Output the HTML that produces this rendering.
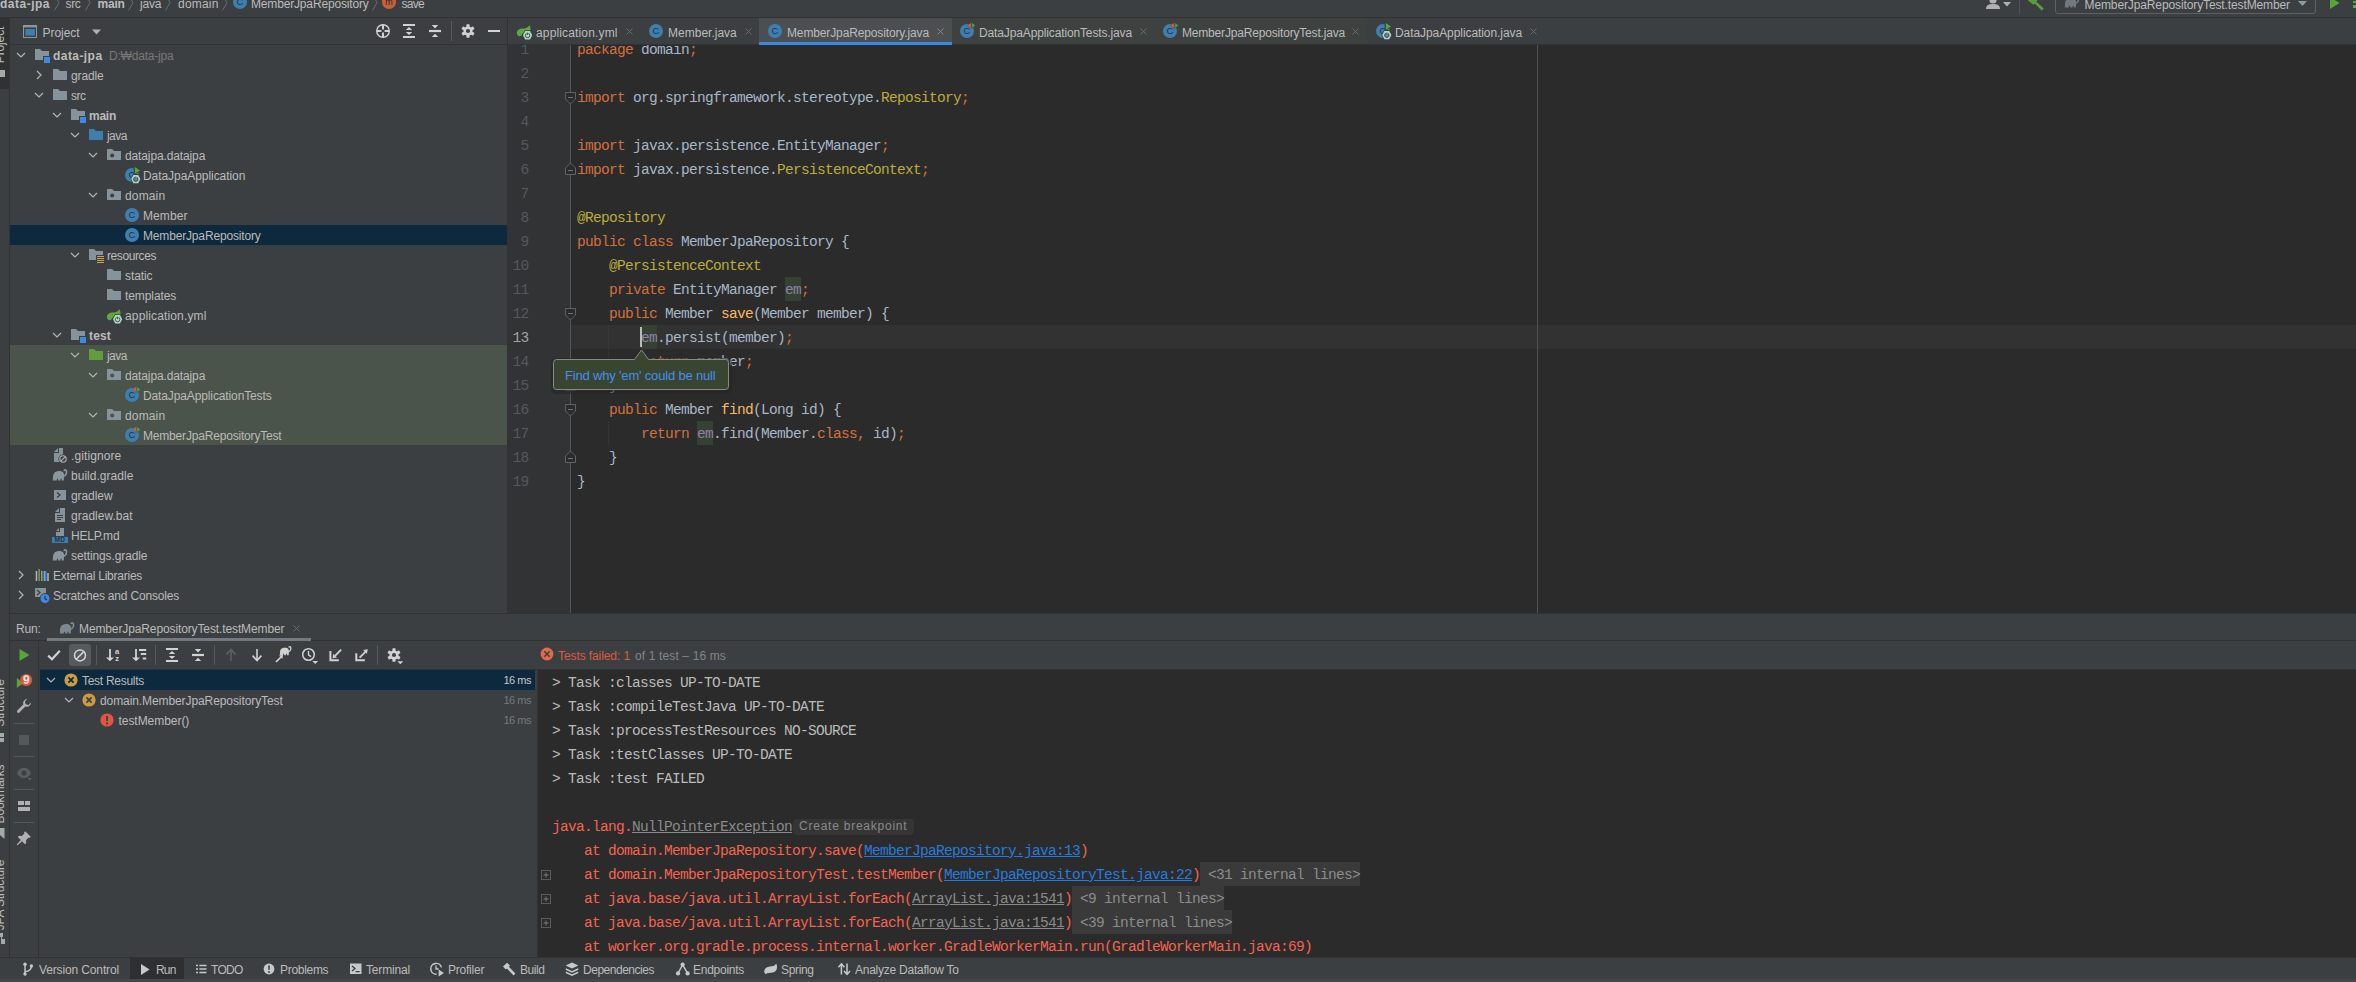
<!DOCTYPE html><html><head><meta charset='utf-8'><title>data-jpa</title><style>
*{box-sizing:border-box;margin:0;padding:0}
html,body{width:2356px;height:982px;overflow:hidden;background:#3c3f41}
body{position:relative;font-family:"Liberation Sans","NanumGothic","Noto Sans CJK KR",sans-serif;font-size:12px;color:#bbbbbb;letter-spacing:-0.14px}
.a{position:absolute}
.t{position:absolute;white-space:pre;line-height:20px;height:20px}
.mono{font-family:"Liberation Mono","DejaVu Sans Mono",monospace;font-size:14.5px;letter-spacing:-0.7015px}
.code{position:absolute;white-space:pre;line-height:24px;height:24px;color:#a9b7c6}
.k{color:#d4703c}.an{color:#bcac3c}.fn{color:#f8b868}.fld{color:#9182a3}
.ln{position:absolute;width:60px;text-align:right;line-height:24px;height:24px;color:#606366}
.err{color:#f6634f}.lnk{color:#287bde;text-decoration:underline}.glnk{color:#8a8a8a;text-decoration:underline}
.fold{background:#3a3a3a;color:#8c8c8c}
svg{position:absolute;overflow:visible}
</style></head><body><div class='a' style='left:0px;top:0px;width:2356px;height:17px;background:#3c3f41;'></div><div class='a' style='left:0px;top:17px;width:2356px;height:1px;background:#323232;'></div><div class='t' style='left:0px;top:-6px;font-weight:bold;letter-spacing:0.498px'>data-jpa</div><svg style='left:53px;top:-6px' width='8' height='17' viewBox='0 0 8 17'><path d='M1.5,0.5 L6,8.5 L1.5,16.5' stroke='#6a6d6f' stroke-width='1' fill='none'/></svg><div class='t' style='left:65.5px;top:-6px;;letter-spacing:-0.333px'>src</div><svg style='left:84px;top:-6px' width='8' height='17' viewBox='0 0 8 17'><path d='M1.5,0.5 L6,8.5 L1.5,16.5' stroke='#6a6d6f' stroke-width='1' fill='none'/></svg><div class='t' style='left:97.5px;top:-6px;font-weight:bold;letter-spacing:-0.204px'>main</div><svg style='left:127px;top:-6px' width='8' height='17' viewBox='0 0 8 17'><path d='M1.5,0.5 L6,8.5 L1.5,16.5' stroke='#6a6d6f' stroke-width='1' fill='none'/></svg><div class='t' style='left:140px;top:-6px;;letter-spacing:-0.179px'>java</div><svg style='left:164px;top:-6px' width='8' height='17' viewBox='0 0 8 17'><path d='M1.5,0.5 L6,8.5 L1.5,16.5' stroke='#6a6d6f' stroke-width='1' fill='none'/></svg><div class='t' style='left:178px;top:-6px;;letter-spacing:0.207px'>domain</div><svg style='left:221px;top:-6px' width='8' height='17' viewBox='0 0 8 17'><path d='M1.5,0.5 L6,8.5 L1.5,16.5' stroke='#6a6d6f' stroke-width='1' fill='none'/></svg><svg style='left:232px;top:-6px' width='16' height='16' viewBox='0 0 16 16'><circle cx='8' cy='8' r='7' fill='#3e7fb0' /><text x='8' y='11.3' text-anchor='middle' font-family='Liberation Sans,sans-serif' font-size='9.5' letter-spacing='0' fill='#1d3447'>C</text></svg><div class='t' style='left:251px;top:-6px;;letter-spacing:-0.164px'>MemberJpaRepository</div><svg style='left:371px;top:-6px' width='8' height='17' viewBox='0 0 8 17'><path d='M1.5,0.5 L6,8.5 L1.5,16.5' stroke='#6a6d6f' stroke-width='1' fill='none'/></svg><svg style='left:381px;top:-6px' width='16' height='16' viewBox='0 0 16 16'><circle cx='8' cy='8' r='7' fill='#c4623f'/><text x='8' y='11' text-anchor='middle' font-family='Liberation Sans,sans-serif' font-size='9' fill='#3a1d12'>m</text></svg><div class='t' style='left:401.5px;top:-6px;;letter-spacing:-0.740px'>save</div><svg style='left:1985px;top:-6px' width='16' height='16' viewBox='0 0 16 16'><circle cx='8' cy='6' r='3.6' fill='#afb1b3'/><path d='M1,15 C1,11 4,10 8,10 C12,10 15,11 15,15 Z' fill='#afb1b3'/></svg><svg style='left:2003px;top:2px' width='8' height='5' viewBox='0 0 8 5'><path d='M0,0 H8 L4,4.5 Z' fill='#afb1b3'/></svg><div class='a' style='left:2019px;top:0px;width:1px;height:14px;background:#515456;'></div><svg style='left:2027px;top:-6px' width='16' height='16' viewBox='0 0 16 16'><path d='M1,6.4 L5.5,2 L10.5,6.6 L9.4,7.8 L16.8,14.4 L14.6,16.6 L7.6,9.6 L6.4,10.8 Z' fill='#5d9c3c'/></svg><div class='a' style='left:2055px;top:-10px;width:261px;height:24px;border:1px solid #5e6162;border-radius:3px'></div><svg style='left:2064px;top:-6px' width='16' height='16' viewBox='0 0 16 16'><path d='M0.8,13.5 L1,9.5 C1.2,6.5 3,4.4 5.5,4.2 C8,3.8 10.6,4.2 11.6,6 L12.2,8.6 L11.8,13.5 L9.8,13.5 L9.6,11.8 L8.6,11.8 L8.4,13.5 L6.2,13.5 L6,11.8 L5,11.8 L4.8,13.5 Z' fill='#6e7a80'/><path d='M11.2,9.2 C13.8,8.8 14.9,6.2 14.5,4.2 C14.2,2.7 12.8,2.5 12.2,3.3' fill='none' stroke='#6e7a80' stroke-width='1.6' stroke-linecap='round'/></svg><div class='t' style='left:2084.5px;top:-5px;;letter-spacing:-0.115px'>MemberJpaRepositoryTest.testMember</div><svg style='left:2298px;top:1px' width='9' height='5' viewBox='0 0 9 5'><path d='M0,0 H9 L4.5,5 Z' fill='#8e9c99'/></svg><svg style='left:2330px;top:-3px' width='10' height='12' viewBox='0 0 10 12'><path d='M0,0 L9.5,6 L0,12 Z' fill='#57a63a'/></svg><div class='a' style='left:2353px;top:1px;width:3px;height:2px;background:#57a63a;'></div><div class='a' style='left:2353px;top:5px;width:3px;height:3px;background:#57a63a;'></div><div class='a' style='left:0px;top:18px;width:10px;height:940px;background:#3c3f41;'></div><div class='a' style='left:0px;top:18px;width:9px;height:71px;background:#2f3133;'></div><div class='a' style='left:9px;top:18px;width:1px;height:940px;background:#323232;'></div><div class='t' style='left:0px;top:45px;transform:translate(-50%,-50%) rotate(-90deg);'>Project</div><div class='a' style='left:0px;top:70px;width:5px;height:7px;background:#a3aaa8;'></div><div class='t' style='left:0px;top:703px;transform:translate(-50%,-50%) rotate(-90deg);'>Structure</div><div class='a' style='left:0px;top:733px;width:4px;height:4px;background:#a3aaa8;'></div><div class='a' style='left:0px;top:738px;width:4px;height:4px;background:#a3aaa8;'></div><div class='t' style='left:0px;top:794px;transform:translate(-50%,-50%) rotate(-90deg);'>Bookmarks</div><svg style='left:0px;top:828px' width='5' height='11' viewBox='0 0 5 11'><path d='M0,0 H4.5 V11 L0,7 Z' fill='#a3aaa8'/></svg><div class='t' style='left:0px;top:895px;transform:translate(-50%,-50%) rotate(-90deg);'>JPA Structure</div><div class='a' style='left:0px;top:933px;width:3px;height:4px;background:#a3aaa8;'></div><div class='a' style='left:1px;top:937px;width:1px;height:4px;background:#a3aaa8;'></div><div class='a' style='left:1px;top:939px;width:4px;height:5px;background:#a3aaa8;'></div><div class='a' style='left:10px;top:18px;width:497px;height:26px;background:#3c3f41;'></div><div class='a' style='left:10px;top:44px;width:497px;height:1px;background:#323232;'></div><div class='a' style='left:507px;top:18px;width:1px;height:596px;background:#323232;'></div><svg style='left:22px;top:23px' width='16' height='16' viewBox='0 0 16 16'><rect x='1.5' y='2.5' width='13' height='12' fill='none' stroke='#8b979e' stroke-width='1'/><rect x='1' y='2' width='14' height='2.4' fill='#8b979e'/><rect x='3.3' y='6' width='9.6' height='6.6' fill='#3e7fb0'/></svg><div class='t' style='left:42.5px;top:23px;;letter-spacing:-0.051px'>Project</div><svg style='left:92px;top:29px' width='9' height='6' viewBox='0 0 9 6'><path d='M0,0.5 H9 L4.5,5.5 Z' fill='#afb1b3'/></svg><svg style='left:375px;top:23px' width='16' height='16' viewBox='0 0 16 16'><circle cx='8' cy='8' r='6.3' fill='none' stroke='#d0d3d2' stroke-width='1.4'/><path d='M8,1.8v4.6M8,9.6V14.2M1.8,8h4.6M9.6,8H14.2' stroke='#d0d3d2' stroke-width='2'/></svg><svg style='left:401px;top:23px' width='16' height='16' viewBox='0 0 16 16'><path d='M2,2h12M2,14h12' stroke='#d0d3d2' stroke-width='2'/><path d='M8,4 L11.2,7 H4.8 Z M8,12 L4.8,9 H11.2 Z' fill='#d0d3d2'/></svg><svg style='left:427px;top:23px' width='16' height='16' viewBox='0 0 16 16'><path d='M2,8h12' stroke='#d0d3d2' stroke-width='2.2'/><path d='M8,5.4 L4.8,2 H11.2 Z M8,10.8 L11.2,14 H4.8 Z' fill='#d0d3d2'/></svg><div class='a' style='left:451px;top:21px;width:1px;height:20px;background:#555a58;'></div><svg style='left:460px;top:23px' width='16' height='16' viewBox='0 0 16 16'><g transform='translate(8 8)'><g fill='#d0d3d2'><rect x='-1.6' y='-6.7' width='3.2' height='4' rx='0.6' transform='rotate(0)'/><rect x='-1.6' y='-6.7' width='3.2' height='4' rx='0.6' transform='rotate(60)'/><rect x='-1.6' y='-6.7' width='3.2' height='4' rx='0.6' transform='rotate(120)'/><rect x='-1.6' y='-6.7' width='3.2' height='4' rx='0.6' transform='rotate(180)'/><rect x='-1.6' y='-6.7' width='3.2' height='4' rx='0.6' transform='rotate(240)'/><rect x='-1.6' y='-6.7' width='3.2' height='4' rx='0.6' transform='rotate(300)'/></g><circle r='4.5' fill='#d0d3d2'/><circle r='2.1' fill='#3c3f41'/></g></svg><div class='a' style='left:488px;top:30px;width:12px;height:2px;background:#d0d3d2;'></div><div class='a' style='left:508px;top:18px;width:1848px;height:26px;background:#3c3f41;'></div><div class='a' style='left:508px;top:44px;width:1848px;height:1px;background:#323232;'></div><div class='a' style='left:759px;top:18px;width:193px;height:24px;background:#4b4f51;'></div><div class='a' style='left:759px;top:42px;width:193px;height:3px;background:#3989e0;'></div><div class='a' style='left:952px;top:18px;width:415px;height:26px;background:#3d4240;'></div><svg style='left:516px;top:23px' width='16' height='16' viewBox='0 0 16 16'><path d='M1.2,11.4 C0,7.4 3,5.6 7.6,5.6 C10.4,5.4 12.2,4.2 13.4,2.2 C15.2,5.4 15,8 12.4,8.6 C8,9.6 6.6,10.2 5.4,12.6 C4,13.6 2,13.2 1.2,11.4 Z' fill='#5fa83c'/><path d='M6.199999999999999,12.3 L8.799999999999999,7.300000000000001 H14.4 L17.0,12.3 L14.4,17.3 H8.799999999999999 Z' fill='#3c3f41'/><path d='M7.0,12.3 L9.200000000000001,8.100000000000001 H13.999999999999998 L16.2,12.3 L13.999999999999998,16.5 H9.200000000000001 Z' fill='#b4d4c4'/><circle cx='11.6' cy='12.5' r='2.2' fill='#b4d4c4' stroke='#3a4a44' stroke-width='0.9'/><rect x='10.7' y='9.3' width='1.8' height='2.3' fill='#b4d4c4'/><path d='M11.6,9.700000000000001v2.4' stroke='#3a4a44' stroke-width='0.9'/></svg><div class='t' style='left:536px;top:23px;;letter-spacing:0.148px'>application.yml</div><svg style='left:625.5px;top:27.5px' width='7' height='7' viewBox='0 0 7 7'><path d='M0.5,0.5 L6.5,6.5 M6.5,0.5 L0.5,6.5' stroke='#6e6e6e' stroke-width='0.9'/></svg><svg style='left:648px;top:23px' width='16' height='16' viewBox='0 0 16 16'><circle cx='8' cy='8' r='7' fill='#3e7fb0' /><text x='8' y='11.3' text-anchor='middle' font-family='Liberation Sans,sans-serif' font-size='9.5' letter-spacing='0' fill='#1d3447'>C</text></svg><div class='t' style='left:668px;top:23px;;letter-spacing:0.009px'>Member.java</div><svg style='left:744.5px;top:27.5px' width='7' height='7' viewBox='0 0 7 7'><path d='M0.5,0.5 L6.5,6.5 M6.5,0.5 L0.5,6.5' stroke='#6e6e6e' stroke-width='0.9'/></svg><svg style='left:767px;top:23px' width='16' height='16' viewBox='0 0 16 16'><circle cx='8' cy='8' r='7' fill='#3e7fb0' /><text x='8' y='11.3' text-anchor='middle' font-family='Liberation Sans,sans-serif' font-size='9.5' letter-spacing='0' fill='#1d3447'>C</text></svg><div class='t' style='left:787px;top:23px;;letter-spacing:-0.132px'>MemberJpaRepository.java</div><svg style='left:936.5px;top:27.5px' width='7' height='7' viewBox='0 0 7 7'><path d='M0.5,0.5 L6.5,6.5 M6.5,0.5 L0.5,6.5' stroke='#8a8d8f' stroke-width='0.9'/></svg><svg style='left:959px;top:23px' width='16' height='16' viewBox='0 0 16 16'><circle cx='8' cy='8' r='7' fill='#3e7fb0' /><text x='8' y='11.3' text-anchor='middle' font-family='Liberation Sans,sans-serif' font-size='9.5' letter-spacing='0' fill='#1d3447'>C</text><path d='M8.6,2.4 L12.1,-0.6 V5.4 Z' fill='#f0594a' stroke='#3d4240' stroke-width='0.5'/><path d='M12.8,-0.6 L16.3,2.4 L12.8,5.4 Z' fill='#57a63a' stroke='#3d4240' stroke-width='0.5'/></svg><div class='t' style='left:979px;top:23px;;letter-spacing:-0.134px'>DataJpaApplicationTests.java</div><svg style='left:1139.5px;top:27.5px' width='7' height='7' viewBox='0 0 7 7'><path d='M0.5,0.5 L6.5,6.5 M6.5,0.5 L0.5,6.5' stroke='#6e6e6e' stroke-width='0.9'/></svg><svg style='left:1162px;top:23px' width='16' height='16' viewBox='0 0 16 16'><circle cx='8' cy='8' r='7' fill='#3e7fb0' /><text x='8' y='11.3' text-anchor='middle' font-family='Liberation Sans,sans-serif' font-size='9.5' letter-spacing='0' fill='#1d3447'>C</text><path d='M8.6,2.4 L12.1,-0.6 V5.4 Z' fill='#f0594a' stroke='#3d4240' stroke-width='0.5'/><path d='M12.8,-0.6 L16.3,2.4 L12.8,5.4 Z' fill='#57a63a' stroke='#3d4240' stroke-width='0.5'/></svg><div class='t' style='left:1182px;top:23px;;letter-spacing:-0.181px'>MemberJpaRepositoryTest.java</div><svg style='left:1351.5px;top:27.5px' width='7' height='7' viewBox='0 0 7 7'><path d='M0.5,0.5 L6.5,6.5 M6.5,0.5 L0.5,6.5' stroke='#6e6e6e' stroke-width='0.9'/></svg><svg style='left:1375px;top:23px' width='16' height='16' viewBox='0 0 16 16'><circle cx='8' cy='8' r='7' fill='#3e7fb0' /><text x='8' y='11.3' text-anchor='middle' font-family='Liberation Sans,sans-serif' font-size='9.5' letter-spacing='0' fill='#1d3447'>C</text><path d='M9.6,-1.4 L17.6,3.4 L9.6,8.2 Z' fill='#3c3f41'/><path d='M10.8,0 L16.1,3.4 L10.8,6.8 Z' fill='#57a63a'/><path d='M6.4,12.1 L9.000000000000002,7.1 H14.6 L17.200000000000003,12.1 L14.6,17.1 H9.000000000000002 Z' fill='#3c3f41'/><path d='M7.200000000000001,12.1 L9.4,7.8999999999999995 H14.200000000000001 L16.4,12.1 L14.200000000000001,16.3 H9.4 Z' fill='#b4d4c4'/><circle cx='11.8' cy='12.299999999999999' r='2.2' fill='#4a8ab5' stroke='#3a4a44' stroke-width='0.9'/><rect x='10.9' y='9.1' width='1.8' height='2.3' fill='#b4d4c4'/><path d='M11.8,9.5v2.4' stroke='#3a4a44' stroke-width='0.9'/></svg><div class='t' style='left:1395px;top:23px;;letter-spacing:-0.076px'>DataJpaApplication.java</div><svg style='left:1529.5px;top:27.5px' width='7' height='7' viewBox='0 0 7 7'><path d='M0.5,0.5 L6.5,6.5 M6.5,0.5 L0.5,6.5' stroke='#6e6e6e' stroke-width='0.9'/></svg><div class='a' style='left:10px;top:45px;width:497px;height:568px;background:#3c3f41;'></div><div class='a' style='left:10px;top:225px;width:497px;height:20px;background:#0d293e;'></div><div class='a' style='left:10px;top:345px;width:497px;height:100px;background:#4a544a;'></div><svg style='left:15px;top:51px' width='12' height='8' viewBox='0 0 12 8'><path d='M2,2 L6,6 L10,2' fill='none' stroke='#adb8b5' stroke-width='1.2'/></svg><svg style='left:34px;top:47px' width='16' height='16' viewBox='0 0 16 16'><path d='M1,13 V2 H6 L8,4 H15 V13 Z' fill='#87939a'/><rect x='9' y='9' width='7' height='7' fill='#3c3f41'/><rect x='10' y='10' width='6' height='6' fill='#3b8ae6'/></svg><div class='t' style='left:53px;top:45.5px;font-weight:bold;letter-spacing:0.436px'>data-jpa</div><svg style='left:35px;top:69px' width='8' height='12' viewBox='0 0 8 12'><path d='M2,2 L6,6 L2,10' fill='none' stroke='#adb8b5' stroke-width='1.2'/></svg><svg style='left:52px;top:67px' width='16' height='16' viewBox='0 0 16 16'><path d='M1,13 V2 H6 L8,4 H15 V13 Z' fill='#87939a'/></svg><div class='t' style='left:71px;top:65.5px;;letter-spacing:-0.127px'>gradle</div><svg style='left:33px;top:91px' width='12' height='8' viewBox='0 0 12 8'><path d='M2,2 L6,6 L10,2' fill='none' stroke='#adb8b5' stroke-width='1.2'/></svg><svg style='left:52px;top:87px' width='16' height='16' viewBox='0 0 16 16'><path d='M1,13 V2 H6 L8,4 H15 V13 Z' fill='#87939a'/></svg><div class='t' style='left:71px;top:85.5px;;letter-spacing:-0.500px'>src</div><svg style='left:51px;top:111px' width='12' height='8' viewBox='0 0 12 8'><path d='M2,2 L6,6 L10,2' fill='none' stroke='#adb8b5' stroke-width='1.2'/></svg><svg style='left:70px;top:107px' width='16' height='16' viewBox='0 0 16 16'><path d='M1,13 V2 H6 L8,4 H15 V13 Z' fill='#87939a'/><rect x='9' y='9' width='7' height='7' fill='#3c3f41'/><rect x='10' y='10' width='6' height='6' fill='#3b8ae6'/></svg><div class='t' style='left:89px;top:105.5px;font-weight:bold;letter-spacing:-0.254px'>main</div><svg style='left:69px;top:131px' width='12' height='8' viewBox='0 0 12 8'><path d='M2,2 L6,6 L10,2' fill='none' stroke='#adb8b5' stroke-width='1.2'/></svg><svg style='left:88px;top:127px' width='16' height='16' viewBox='0 0 16 16'><path d='M1,13 V2 H6 L8,4 H15 V13 Z' fill='#3e7fb0'/></svg><div class='t' style='left:107px;top:125.5px;;letter-spacing:-0.554px'>java</div><svg style='left:87px;top:151px' width='12' height='8' viewBox='0 0 12 8'><path d='M2,2 L6,6 L10,2' fill='none' stroke='#adb8b5' stroke-width='1.2'/></svg><svg style='left:106px;top:147px' width='16' height='16' viewBox='0 0 16 16'><path d='M1,13 V2 H6 L8,4 H15 V13 Z' fill='#87939a'/><circle cx='6.2' cy='8.5' r='2' fill='#3c3f41'/></svg><div class='t' style='left:125px;top:145.5px;;letter-spacing:-0.125px'>datajpa.datajpa</div><svg style='left:124px;top:167px' width='16' height='16' viewBox='0 0 16 16'><circle cx='8' cy='8' r='7' fill='#3e7fb0' /><text x='8' y='11.3' text-anchor='middle' font-family='Liberation Sans,sans-serif' font-size='9.5' letter-spacing='0' fill='#1d3447'>C</text><path d='M9.6,-1.4 L17.6,3.4 L9.6,8.2 Z' fill='#3c3f41'/><path d='M10.8,0 L16.1,3.4 L10.8,6.8 Z' fill='#57a63a'/><path d='M6.4,12.1 L9.000000000000002,7.1 H14.6 L17.200000000000003,12.1 L14.6,17.1 H9.000000000000002 Z' fill='#3c3f41'/><path d='M7.200000000000001,12.1 L9.4,7.8999999999999995 H14.200000000000001 L16.4,12.1 L14.200000000000001,16.3 H9.4 Z' fill='#b4d4c4'/><circle cx='11.8' cy='12.299999999999999' r='2.2' fill='#4a8ab5' stroke='#3a4a44' stroke-width='0.9'/><rect x='10.9' y='9.1' width='1.8' height='2.3' fill='#b4d4c4'/><path d='M11.8,9.5v2.4' stroke='#3a4a44' stroke-width='0.9'/></svg><div class='t' style='left:143px;top:165.5px;;letter-spacing:-0.061px'>DataJpaApplication</div><svg style='left:87px;top:191px' width='12' height='8' viewBox='0 0 12 8'><path d='M2,2 L6,6 L10,2' fill='none' stroke='#adb8b5' stroke-width='1.2'/></svg><svg style='left:106px;top:187px' width='16' height='16' viewBox='0 0 16 16'><path d='M1,13 V2 H6 L8,4 H15 V13 Z' fill='#87939a'/><circle cx='6.2' cy='8.5' r='2' fill='#3c3f41'/></svg><div class='t' style='left:125px;top:185.5px;;letter-spacing:0.140px'>domain</div><svg style='left:124px;top:207px' width='16' height='16' viewBox='0 0 16 16'><circle cx='8' cy='8' r='7' fill='#3e7fb0' /><text x='8' y='11.3' text-anchor='middle' font-family='Liberation Sans,sans-serif' font-size='9.5' letter-spacing='0' fill='#1d3447'>C</text></svg><div class='t' style='left:143px;top:205.5px;;letter-spacing:0.081px'>Member</div><svg style='left:124px;top:227px' width='16' height='16' viewBox='0 0 16 16'><circle cx='8' cy='8' r='7' fill='#3e7fb0' /><text x='8' y='11.3' text-anchor='middle' font-family='Liberation Sans,sans-serif' font-size='9.5' letter-spacing='0' fill='#1d3447'>C</text></svg><div class='t' style='left:143px;top:225.5px;;letter-spacing:-0.164px'>MemberJpaRepository</div><svg style='left:69px;top:251px' width='12' height='8' viewBox='0 0 12 8'><path d='M2,2 L6,6 L10,2' fill='none' stroke='#adb8b5' stroke-width='1.2'/></svg><svg style='left:88px;top:247px' width='16' height='16' viewBox='0 0 16 16'><path d='M1,13 V2 H6 L8,4 H15 V13 Z' fill='#87939a'/><rect x='8' y='8' width='8' height='8' fill='#3c3f41'/><path d='M9,9.5h7M9,11.5h7M9,13.5h7M9,15.5h7' stroke='#c9a64b' stroke-width='1'/></svg><div class='t' style='left:107px;top:245.5px;;letter-spacing:-0.399px'>resources</div><svg style='left:106px;top:267px' width='16' height='16' viewBox='0 0 16 16'><path d='M1,13 V2 H6 L8,4 H15 V13 Z' fill='#87939a'/></svg><div class='t' style='left:125px;top:265.5px;;letter-spacing:-0.086px'>static</div><svg style='left:106px;top:287px' width='16' height='16' viewBox='0 0 16 16'><path d='M1,13 V2 H6 L8,4 H15 V13 Z' fill='#87939a'/></svg><div class='t' style='left:125px;top:285.5px;;letter-spacing:-0.092px'>templates</div><svg style='left:106px;top:307px' width='16' height='16' viewBox='0 0 16 16'><path d='M1.2,11.4 C0,7.4 3,5.6 7.6,5.6 C10.4,5.4 12.2,4.2 13.4,2.2 C15.2,5.4 15,8 12.4,8.6 C8,9.6 6.6,10.2 5.4,12.6 C4,13.6 2,13.2 1.2,11.4 Z' fill='#5fa83c'/><path d='M6.199999999999999,12.3 L8.799999999999999,7.300000000000001 H14.4 L17.0,12.3 L14.4,17.3 H8.799999999999999 Z' fill='#3c3f41'/><path d='M7.0,12.3 L9.200000000000001,8.100000000000001 H13.999999999999998 L16.2,12.3 L13.999999999999998,16.5 H9.200000000000001 Z' fill='#b4d4c4'/><circle cx='11.6' cy='12.5' r='2.2' fill='#b4d4c4' stroke='#3a4a44' stroke-width='0.9'/><rect x='10.7' y='9.3' width='1.8' height='2.3' fill='#b4d4c4'/><path d='M11.6,9.700000000000001v2.4' stroke='#3a4a44' stroke-width='0.9'/></svg><div class='t' style='left:125px;top:305.5px;;letter-spacing:0.142px'>application.yml</div><svg style='left:51px;top:331px' width='12' height='8' viewBox='0 0 12 8'><path d='M2,2 L6,6 L10,2' fill='none' stroke='#adb8b5' stroke-width='1.2'/></svg><svg style='left:70px;top:327px' width='16' height='16' viewBox='0 0 16 16'><path d='M1,13 V2 H6 L8,4 H15 V13 Z' fill='#87939a'/><rect x='9' y='9' width='7' height='7' fill='#3c3f41'/><rect x='10' y='10' width='6' height='6' fill='#3b8ae6'/></svg><div class='t' style='left:89px;top:325.5px;font-weight:bold;letter-spacing:0.139px'>test</div><svg style='left:69px;top:351px' width='12' height='8' viewBox='0 0 12 8'><path d='M2,2 L6,6 L10,2' fill='none' stroke='#adb8b5' stroke-width='1.2'/></svg><svg style='left:88px;top:347px' width='16' height='16' viewBox='0 0 16 16'><path d='M1,13 V2 H6 L8,4 H15 V13 Z' fill='#5f9d3e'/></svg><div class='t' style='left:107px;top:345.5px;;letter-spacing:-0.554px'>java</div><svg style='left:87px;top:371px' width='12' height='8' viewBox='0 0 12 8'><path d='M2,2 L6,6 L10,2' fill='none' stroke='#adb8b5' stroke-width='1.2'/></svg><svg style='left:106px;top:367px' width='16' height='16' viewBox='0 0 16 16'><path d='M1,13 V2 H6 L8,4 H15 V13 Z' fill='#87939a'/><circle cx='6.2' cy='8.5' r='2' fill='#4a544a'/></svg><div class='t' style='left:125px;top:365.5px;;letter-spacing:-0.125px'>datajpa.datajpa</div><svg style='left:124px;top:387px' width='16' height='16' viewBox='0 0 16 16'><circle cx='8' cy='8' r='7' fill='#3e7fb0' /><text x='8' y='11.3' text-anchor='middle' font-family='Liberation Sans,sans-serif' font-size='9.5' letter-spacing='0' fill='#1d3447'>C</text><path d='M8.6,2.4 L12.1,-0.6 V5.4 Z' fill='#f0594a' stroke='#4a544a' stroke-width='0.5'/><path d='M12.8,-0.6 L16.3,2.4 L12.8,5.4 Z' fill='#57a63a' stroke='#4a544a' stroke-width='0.5'/></svg><div class='t' style='left:143px;top:385.5px;;letter-spacing:-0.123px'>DataJpaApplicationTests</div><svg style='left:87px;top:411px' width='12' height='8' viewBox='0 0 12 8'><path d='M2,2 L6,6 L10,2' fill='none' stroke='#adb8b5' stroke-width='1.2'/></svg><svg style='left:106px;top:407px' width='16' height='16' viewBox='0 0 16 16'><path d='M1,13 V2 H6 L8,4 H15 V13 Z' fill='#87939a'/><circle cx='6.2' cy='8.5' r='2' fill='#4a544a'/></svg><div class='t' style='left:125px;top:405.5px;;letter-spacing:0.140px'>domain</div><svg style='left:124px;top:427px' width='16' height='16' viewBox='0 0 16 16'><circle cx='8' cy='8' r='7' fill='#3e7fb0' /><text x='8' y='11.3' text-anchor='middle' font-family='Liberation Sans,sans-serif' font-size='9.5' letter-spacing='0' fill='#1d3447'>C</text><path d='M8.6,2.4 L12.1,-0.6 V5.4 Z' fill='#f0594a' stroke='#4a544a' stroke-width='0.5'/><path d='M12.8,-0.6 L16.3,2.4 L12.8,5.4 Z' fill='#57a63a' stroke='#4a544a' stroke-width='0.5'/></svg><div class='t' style='left:143px;top:425.5px;;letter-spacing:-0.184px'>MemberJpaRepositoryTest</div><svg style='left:52px;top:447px' width='16' height='16' viewBox='0 0 16 16'><path d='M2,15 V6 H7 V1 H11 V15 Z' fill='#87939a'/><path d='M2,5 L6,1 V5 Z' fill='#87939a'/><circle cx='11' cy='12' r='4.6' fill='#3c3f41'/><circle cx='11' cy='12' r='3.2' fill='none' stroke='#afb5b8' stroke-width='1.1'/><path d='M8.8,14.2 L13.2,9.8' stroke='#afb5b8' stroke-width='1.1'/></svg><div class='t' style='left:71px;top:445.5px;;letter-spacing:0.102px'>.gitignore</div><svg style='left:52px;top:467px' width='16' height='16' viewBox='0 0 16 16'><path d='M0.8,13.5 L1,9.5 C1.2,6.5 3,4.4 5.5,4.2 C8,3.8 10.6,4.2 11.6,6 L12.2,8.6 L11.8,13.5 L9.8,13.5 L9.6,11.8 L8.6,11.8 L8.4,13.5 L6.2,13.5 L6,11.8 L5,11.8 L4.8,13.5 Z' fill='#8b979e'/><path d='M11.2,9.2 C13.8,8.8 14.9,6.2 14.5,4.2 C14.2,2.7 12.8,2.5 12.2,3.3' fill='none' stroke='#8b979e' stroke-width='1.6' stroke-linecap='round'/></svg><div class='t' style='left:71px;top:465.5px;;letter-spacing:0.029px'>build.gradle</div><svg style='left:52px;top:487px' width='16' height='16' viewBox='0 0 16 16'><rect x='2' y='3' width='12' height='10' fill='#87939a'/><path d='M5,5.5 L8,8 L5,10.5' fill='none' stroke='#3c3f41' stroke-width='1.4'/></svg><div class='t' style='left:71px;top:485.5px;;letter-spacing:-0.076px'>gradlew</div><svg style='left:52px;top:507px' width='16' height='16' viewBox='0 0 16 16'><path d='M3,15 V6 H8 V1 H13 V15 Z' fill='#87939a'/><path d='M3,5 L7,1 V5 Z' fill='#87939a'/><path d='M5,8.5h6M5,10.5h6M5,12.5h4' stroke='#3c3f41' stroke-width='1'/></svg><div class='t' style='left:71px;top:505.5px;;letter-spacing:0.019px'>gradlew.bat</div><svg style='left:52px;top:527px' width='16' height='16' viewBox='0 0 16 16'><path d='M4,9 V5 H8 V1 H12 V9 Z' fill='#87939a'/><path d='M4,4 L7,1 V4 Z' fill='#87939a'/><rect x='0' y='10' width='16' height='6' fill='#3e7fb0'/><text x='8' y='15.3' text-anchor='middle' font-family='Liberation Sans,sans-serif' font-weight='bold' font-size='6.6' letter-spacing='0.3' fill='#1d3447'>MD</text></svg><div class='t' style='left:71px;top:525.5px;;letter-spacing:-0.202px'>HELP.md</div><svg style='left:52px;top:547px' width='16' height='16' viewBox='0 0 16 16'><path d='M0.8,13.5 L1,9.5 C1.2,6.5 3,4.4 5.5,4.2 C8,3.8 10.6,4.2 11.6,6 L12.2,8.6 L11.8,13.5 L9.8,13.5 L9.6,11.8 L8.6,11.8 L8.4,13.5 L6.2,13.5 L6,11.8 L5,11.8 L4.8,13.5 Z' fill='#8b979e'/><path d='M11.2,9.2 C13.8,8.8 14.9,6.2 14.5,4.2 C14.2,2.7 12.8,2.5 12.2,3.3' fill='none' stroke='#8b979e' stroke-width='1.6' stroke-linecap='round'/></svg><div class='t' style='left:71px;top:545.5px;;letter-spacing:-0.110px'>settings.gradle</div><svg style='left:17px;top:569px' width='8' height='12' viewBox='0 0 8 12'><path d='M2,2 L6,6 L2,10' fill='none' stroke='#adb8b5' stroke-width='1.2'/></svg><svg style='left:34px;top:567px' width='16' height='16' viewBox='0 0 16 16'><path d='M2.5,4v10M10.5,4v10M14,6v8' stroke='#afb1b3' stroke-width='1.6'/><path d='M5.2,2v12' stroke='#62a03a' stroke-width='1.6'/><path d='M7.8,4v10' stroke='#afb1b3' stroke-width='1.2'/><path d='M11.5,4v10' stroke='#3b8ae6' stroke-width='1.8'/></svg><div class='t' style='left:53px;top:565.5px;;letter-spacing:-0.238px'>External Libraries</div><svg style='left:17px;top:589px' width='8' height='12' viewBox='0 0 8 12'><path d='M2,2 L6,6 L2,10' fill='none' stroke='#adb8b5' stroke-width='1.2'/></svg><svg style='left:34px;top:587px' width='16' height='16' viewBox='0 0 16 16'><rect x='1' y='1' width='11' height='9' fill='#87939a'/><path d='M3,3 L6,5.5 L3,8' fill='none' stroke='#3c3f41' stroke-width='1.2'/><circle cx='11' cy='11.5' r='5.4' fill='#3c3f41'/><circle cx='11' cy='11.5' r='4.5' fill='#3b8ae6'/><path d='M11,8.8 V11.6 L13,13' fill='none' stroke='#1d3447' stroke-width='1.1'/></svg><div class='t' style='left:53px;top:585.5px;;letter-spacing:-0.185px'>Scratches and Consoles</div><div class='t' style='left:109px;top:45.5px;color:#787878;letter-spacing:-0.200px'>D:₩data-jpa</div><div class='a' style='left:508px;top:45px;width:1848px;height:568px;background:#2b2b2b;overflow:hidden'><div class='a' style='left:0px;top:0px;width:62px;height:568px;background:#313335;'></div><div class='a' style='left:63px;top:280px;width:1785px;height:24px;background:#323232;'></div><div class='a' style='left:62px;top:0px;width:1px;height:568px;background:#555555;'></div><div class='a' style='left:1029px;top:0px;width:1px;height:568px;background:#4a544a;'></div><div class='ln mono' style='left:-39.60000000000002px;top:-7px;color:#56595c'>1</div><div class='ln mono' style='left:-39.60000000000002px;top:17px;color:#56595c'>2</div><div class='ln mono' style='left:-39.60000000000002px;top:41px;color:#56595c'>3</div><div class='ln mono' style='left:-39.60000000000002px;top:65px;color:#56595c'>4</div><div class='ln mono' style='left:-39.60000000000002px;top:89px;color:#56595c'>5</div><div class='ln mono' style='left:-39.60000000000002px;top:113px;color:#56595c'>6</div><div class='ln mono' style='left:-39.60000000000002px;top:137px;color:#56595c'>7</div><div class='ln mono' style='left:-39.60000000000002px;top:161px;color:#56595c'>8</div><div class='ln mono' style='left:-39.60000000000002px;top:185px;color:#56595c'>9</div><div class='ln mono' style='left:-39.60000000000002px;top:209px;color:#56595c'>10</div><div class='ln mono' style='left:-39.60000000000002px;top:233px;color:#56595c'>11</div><div class='ln mono' style='left:-39.60000000000002px;top:257px;color:#56595c'>12</div><div class='ln mono' style='left:-39.60000000000002px;top:281px;color:#a4a3a3'>13</div><div class='ln mono' style='left:-39.60000000000002px;top:305px;color:#56595c'>14</div><div class='ln mono' style='left:-39.60000000000002px;top:329px;color:#56595c'>15</div><div class='ln mono' style='left:-39.60000000000002px;top:353px;color:#56595c'>16</div><div class='ln mono' style='left:-39.60000000000002px;top:377px;color:#56595c'>17</div><div class='ln mono' style='left:-39.60000000000002px;top:401px;color:#56595c'>18</div><div class='ln mono' style='left:-39.60000000000002px;top:425px;color:#56595c'>19</div><div class='a' style='left:100px;top:280px;width:0;height:48px;border-left:1px dotted #3b3b3b'></div><div class='a' style='left:100px;top:376px;width:0;height:24px;border-left:1px dotted #3b3b3b'></div><div class='a' style='left:277px;top:232px;width:16px;height:24px;background:#344134;'></div><div class='a' style='left:133px;top:280px;width:16px;height:24px;background:#344134;'></div><div class='a' style='left:189px;top:376px;width:16px;height:24px;background:#344134;'></div><div class='code mono' style='left:69px;top:-7px'><span class='k'>package</span> domain<span class='k'>;</span></div><div class='code mono' style='left:69px;top:41px'><span class='k'>import</span> org.springframework.stereotype.<span class='an'>Repository</span><span class='k'>;</span></div><div class='code mono' style='left:69px;top:89px'><span class='k'>import</span> javax.persistence.EntityManager<span class='k'>;</span></div><div class='code mono' style='left:69px;top:113px'><span class='k'>import</span> javax.persistence.<span class='an'>PersistenceContext</span><span class='k'>;</span></div><div class='code mono' style='left:69px;top:161px'><span class='an'>@Repository</span></div><div class='code mono' style='left:69px;top:185px'><span class='k'>public class</span> MemberJpaRepository {</div><div class='code mono' style='left:101px;top:209px'><span class='an'>@PersistenceContext</span></div><div class='code mono' style='left:101px;top:233px'><span class='k'>private</span> EntityManager <span class='fld'>em</span><span class='k'>;</span></div><div class='code mono' style='left:101px;top:257px'><span class='k'>public</span> Member <span class='fn'>save</span>(Member member) {</div><div class='code mono' style='left:133px;top:281px'><span class='fld'>em</span>.persist(member)<span class='k'>;</span></div><div class='code mono' style='left:133px;top:305px'><span class='k'>return</span> member<span class='k'>;</span></div><div class='code mono' style='left:101px;top:329px'>}</div><div class='code mono' style='left:101px;top:353px'><span class='k'>public</span> Member <span class='fn'>find</span>(Long id) {</div><div class='code mono' style='left:133px;top:377px'><span class='k'>return</span> <span class='fld'>em</span>.find(Member.<span class='k'>class,</span> id)<span class='k'>;</span></div><div class='code mono' style='left:101px;top:401px'>}</div><div class='code mono' style='left:69px;top:425px'>}</div><div class='a' style='left:132px;top:282px;width:2px;height:20px;background:#bbbbbb;'></div><svg style='left:57px;top:47px' width='11' height='13' viewBox='0 0 11 13'><path d='M0.5,0.5 H10.5 V7 L5.5,12 L0.5,7 Z' fill='#2b2b2b' stroke='#606366'/><path d='M3,5.5 H8' stroke='#707376'/></svg><svg style='left:57px;top:263px' width='11' height='13' viewBox='0 0 11 13'><path d='M0.5,0.5 H10.5 V7 L5.5,12 L0.5,7 Z' fill='#2b2b2b' stroke='#606366'/><path d='M3,5.5 H8' stroke='#707376'/></svg><svg style='left:57px;top:359px' width='11' height='13' viewBox='0 0 11 13'><path d='M0.5,0.5 H10.5 V7 L5.5,12 L0.5,7 Z' fill='#2b2b2b' stroke='#606366'/><path d='M3,5.5 H8' stroke='#707376'/></svg><svg style='left:57px;top:117px' width='11' height='13' viewBox='0 0 11 13'><path d='M0.5,12.5 H10.5 V6 L5.5,1 L0.5,6 Z' fill='#2b2b2b' stroke='#606366'/><path d='M3,8.5 H8' stroke='#707376'/></svg><svg style='left:57px;top:333px' width='11' height='13' viewBox='0 0 11 13'><path d='M0.5,12.5 H10.5 V6 L5.5,1 L0.5,6 Z' fill='#2b2b2b' stroke='#606366'/><path d='M3,8.5 H8' stroke='#707376'/></svg><svg style='left:57px;top:405px' width='11' height='13' viewBox='0 0 11 13'><path d='M0.5,12.5 H10.5 V6 L5.5,1 L0.5,6 Z' fill='#2b2b2b' stroke='#606366'/><path d='M3,8.5 H8' stroke='#707376'/></svg><svg style='left:38px;top:299px' width='192' height='54' viewBox='546 344 192 54'><rect x='551' y='358' width='181' height='36' rx='5' fill='#242424' opacity='0.55'/><path d='M556.5,359.5 H634.5 L641.5,350 L648.5,359.5 H725.5 Q728.5,359.5 728.5,362.5 V386.5 Q728.5,389.5 725.5,389.5 H556.5 Q553.5,389.5 553.5,386.5 V362.5 Q553.5,359.5 556.5,359.5 Z' fill='#394431' stroke='#868c86' stroke-width='1'/></svg><div class='t' style='left:57px;top:321px;color:#4590ee;font-size:13px;letter-spacing:-0.177px'>Find why 'em' could be null</div></div><div class='a' style='left:10px;top:613px;width:2346px;height:1px;background:#323232;'></div><div class='a' style='left:10px;top:614px;width:2346px;height:26px;background:#3c3f41;'></div><div class='a' style='left:10px;top:640px;width:2346px;height:1px;background:#323232;'></div><div class='t' style='left:16px;top:619px;'>Run:</div><svg style='left:59px;top:620px' width='16' height='16' viewBox='0 0 16 16'><path d='M0.8,13.5 L1,9.5 C1.2,6.5 3,4.4 5.5,4.2 C8,3.8 10.6,4.2 11.6,6 L12.2,8.6 L11.8,13.5 L9.8,13.5 L9.6,11.8 L8.6,11.8 L8.4,13.5 L6.2,13.5 L6,11.8 L5,11.8 L4.8,13.5 Z' fill='#7d898f'/><path d='M11.2,9.2 C13.8,8.8 14.9,6.2 14.5,4.2 C14.2,2.7 12.8,2.5 12.2,3.3' fill='none' stroke='#7d898f' stroke-width='1.6' stroke-linecap='round'/></svg><div class='t' style='left:79px;top:619px;;letter-spacing:-0.118px'>MemberJpaRepositoryTest.testMember</div><svg style='left:292.5px;top:624.5px' width='7' height='7' viewBox='0 0 7 7'><path d='M0.5,0.5 L6.5,6.5 M6.5,0.5 L0.5,6.5' stroke='#6e6e6e' stroke-width='0.9'/></svg><div class='a' style='left:47px;top:638px;width:264px;height:3px;background:#747a80;'></div><div class='a' style='left:10px;top:641px;width:28px;height:316px;background:#3c3f41;'></div><div class='a' style='left:38px;top:641px;width:1px;height:316px;background:#323232;'></div><svg style='left:19px;top:649px' width='11' height='12' viewBox='0 0 11 12'><path d='M0.5,0 L10.5,6 L0.5,12 Z' fill='#57a63a'/></svg><svg style='left:16px;top:672px' width='16' height='16' viewBox='0 0 16 16'><path d='M0.8,6 L7.6,11 L0.8,16 Z' fill='#57a63a'/><circle cx='10.2' cy='8' r='6' fill='#d9573f'/><text x='10.2' y='12.2' text-anchor='middle' font-family='Liberation Sans,sans-serif' font-weight='bold' font-size='12' fill='#f6e4df'>9</text></svg><svg style='left:16px;top:698px' width='16' height='16' viewBox='0 0 16 16'><path d='M15,4.6 A4.3,4.3 0 0 1 9.3,8.6 L3.4,14.6 A1.5,1.5 0 0 1 1.3,12.5 L7.3,6.6 A4.3,4.3 0 0 1 11.4,1 L9,3.6 L9.6,6.3 L12.4,7 Z' fill='#afb1b3'/></svg><div class='a' style='left:14px;top:723px;width:20px;height:1px;background:#555a58;'></div><div class='a' style='left:19px;top:735px;width:10px;height:10px;background:#54585a;'></div><div class='a' style='left:14px;top:756px;width:20px;height:1px;background:#555a58;'></div><svg style='left:16px;top:765px' width='16' height='16' viewBox='0 0 16 16'><path d='M1,8 C3,4 5.5,3 8,3 C10.5,3 13,4 15,8 C13,12 10.5,13 8,13 C5.5,13 3,12 1,8 Z' fill='#5a5e60'/><circle cx='8' cy='8' r='2.6' fill='#3c3f41'/><path d='M11.5,13 h4.5 l-2.25,2.6 z' fill='#5a5e60'/></svg><div class='a' style='left:14px;top:789px;width:20px;height:1px;background:#555a58;'></div><div class='a' style='left:18px;top:801px;width:6px;height:4px;background:#afb1b3;'></div><div class='a' style='left:25px;top:801px;width:5px;height:4px;background:#afb1b3;'></div><div class='a' style='left:18px;top:807px;width:12px;height:4px;background:#afb1b3;'></div><div class='a' style='left:14px;top:822px;width:20px;height:1px;background:#555a58;'></div><svg style='left:16px;top:830px' width='16' height='16' viewBox='0 0 16 16'><path d='M9.2,1.2 L14.8,6.8 L13.6,8 L12.6,7.6 L10,10.2 L10.2,13 L9,14.2 L6,11.2 L1.6,15.2 L0.8,14.4 L4.8,10 L1.8,7 L3,5.8 L5.8,6 L8.4,3.4 L8,2.4 Z' fill='#afb1b3'/></svg><div class='a' style='left:39px;top:641px;width:499px;height:28px;background:#3c3f41;'></div><div class='a' style='left:39px;top:669px;width:2317px;height:1px;background:#323232;'></div><svg style='left:46px;top:647px' width='16' height='16' viewBox='0 0 16 16'><path d='M2.2,8.6 L6,12.2 L13.8,3.8' fill='none' stroke='#d0d3d2' stroke-width='2.2'/></svg><div class='a' style='left:69px;top:644px;width:22px;height:22px;background:#565a5c;border-radius:3px'></div><svg style='left:72px;top:647px' width='16' height='16' viewBox='0 0 16 16'><circle cx='8' cy='8.4' r='5.5' fill='none' stroke='#cfd6d3' stroke-width='1.5'/><path d='M4.2,12.2 L11.8,4.6' stroke='#cfd6d3' stroke-width='1.5'/></svg><div class='a' style='left:96px;top:645px;width:1px;height:20px;background:#555a58;'></div><svg style='left:105px;top:647px' width='16' height='16' viewBox='0 0 16 16'><path d='M5,2 V12' stroke='#d0d3d2' stroke-width='1.8'/><path d='M1,10.6 H9 L5,14.2 Z' fill='#d0d3d2'/><text x='12' y='6.8' text-anchor='middle' font-family='Liberation Sans,sans-serif' font-weight='bold' font-size='7.5' fill='#d0d3d2'>a</text><text x='12' y='14' text-anchor='middle' font-family='Liberation Sans,sans-serif' font-weight='bold' font-size='7.5' fill='#d0d3d2'>z</text></svg><svg style='left:131px;top:647px' width='16' height='16' viewBox='0 0 16 16'><path d='M5,2 V12' stroke='#d0d3d2' stroke-width='1.8'/><path d='M1,10.6 H9 L5,14.2 Z' fill='#d0d3d2'/><path d='M8,3 H15.2 M9.8,7 H15.2 M11.7,11.5 H15.2' stroke='#d0d3d2' stroke-width='2'/></svg><div class='a' style='left:155px;top:645px;width:1px;height:20px;background:#555a58;'></div><svg style='left:164px;top:647px' width='16' height='16' viewBox='0 0 16 16'><path d='M2,2h12M2,14h12' stroke='#d0d3d2' stroke-width='2'/><path d='M8,4 L11.2,7 H4.8 Z M8,12 L4.8,9 H11.2 Z' fill='#d0d3d2'/></svg><svg style='left:190px;top:647px' width='16' height='16' viewBox='0 0 16 16'><path d='M2,8h12' stroke='#d0d3d2' stroke-width='2.2'/><path d='M8,5.4 L4.8,2 H11.2 Z M8,10.8 L11.2,14 H4.8 Z' fill='#d0d3d2'/></svg><div class='a' style='left:214px;top:645px;width:1px;height:20px;background:#555a58;'></div><svg style='left:223px;top:647px' width='16' height='16' viewBox='0 0 16 16'><path d='M8,14 V3' stroke='#5c6062' stroke-width='1.6'/><path d='M3.6,7.4 L8,2.4 L12.4,7.4' fill='none' stroke='#5c6062' stroke-width='1.6'/></svg><svg style='left:249px;top:647px' width='16' height='16' viewBox='0 0 16 16'><path d='M8,2 V13' stroke='#d0d3d2' stroke-width='1.6'/><path d='M3.6,8.6 L8,13.6 L12.4,8.6' fill='none' stroke='#d0d3d2' stroke-width='1.6'/></svg><svg style='left:275px;top:647px' width='16' height='16' viewBox='0 0 16 16'><g transform='translate(4.2,-2.6) scale(0.8)'><path d='M0.8,13.5 L1,9.5 C1.2,6.5 3,4.4 5.5,4.2 C8,3.8 10.6,4.2 11.6,6 L12.2,8.6 L11.8,13.5 L9.8,13.5 L9.6,11.8 L8.6,11.8 L8.4,13.5 L6.2,13.5 L6,11.8 L5,11.8 L4.8,13.5 Z' fill='#d0d3d2'/><path d='M11.2,9.2 C13.8,8.8 14.9,6.2 14.5,4.2 C14.2,2.7 12.8,2.5 12.2,3.3' fill='none' stroke='#d0d3d2' stroke-width='1.6' stroke-linecap='round'/></g><path d='M1,15 L6,10' stroke='#d0d3d2' stroke-width='1.7'/><path d='M8,8 L7.4,12 L4,8.6 Z' fill='#d0d3d2'/></svg><svg style='left:301px;top:647px' width='16' height='16' viewBox='0 0 16 16'><circle cx='7.5' cy='7.5' r='5.8' fill='none' stroke='#d0d3d2' stroke-width='1.5'/><path d='M7.5,4 V7.8 L10,9.6' fill='none' stroke='#d0d3d2' stroke-width='1.4'/><path d='M11.3,14 h5.8 l-2.9,3 z' fill='#d0d3d2'/></svg><svg style='left:327px;top:647px' width='16' height='16' viewBox='0 0 16 16'><path d='M3.4,4 V13.2 H11.8' fill='none' stroke='#d0d3d2' stroke-width='2'/><path d='M14.2,2.6 L8,8.8' stroke='#d0d3d2' stroke-width='1.8'/><path d='M5.6,11.2 L10,10.5 L6.3,6.8 Z' fill='#d0d3d2'/></svg><svg style='left:353px;top:647px' width='16' height='16' viewBox='0 0 16 16'><path d='M3.3,6.2 V13.2 H11.8' fill='none' stroke='#d0d3d2' stroke-width='2'/><path d='M6.6,10.6 L12.4,4.8' stroke='#d0d3d2' stroke-width='1.8'/><path d='M14.8,2.2 L13.9,6.8 L10.2,3.1 Z' fill='#d0d3d2'/></svg><div class='a' style='left:377px;top:645px;width:1px;height:20px;background:#555a58;'></div><svg style='left:386px;top:647px' width='16' height='16' viewBox='0 0 16 16'><g transform='translate(8 8)'><g fill='#d0d3d2'><rect x='-1.6' y='-6.7' width='3.2' height='4' rx='0.6' transform='rotate(0)'/><rect x='-1.6' y='-6.7' width='3.2' height='4' rx='0.6' transform='rotate(60)'/><rect x='-1.6' y='-6.7' width='3.2' height='4' rx='0.6' transform='rotate(120)'/><rect x='-1.6' y='-6.7' width='3.2' height='4' rx='0.6' transform='rotate(180)'/><rect x='-1.6' y='-6.7' width='3.2' height='4' rx='0.6' transform='rotate(240)'/><rect x='-1.6' y='-6.7' width='3.2' height='4' rx='0.6' transform='rotate(300)'/></g><circle r='4.5' fill='#d0d3d2'/><circle r='2.1' fill='#3c3f41'/></g><path d='M11.4,14.2 h5.8 l-2.9,3 z' fill='#d0d3d2'/></svg><svg style='left:539px;top:646px' width='16' height='16' viewBox='0 0 16 16'><circle cx='8' cy='8' r='6.4' fill='#e2694a'/><path d='M5.3,5.3 L10.7,10.7 M10.7,5.3 L5.3,10.7' stroke='#3c3f41' stroke-width='1.5'/></svg><div class='t' style='left:558px;top:645.5px;color:#dc5a46;letter-spacing:-0.092px'>Tests failed: 1</div><div class='t' style='left:635px;top:645.5px;color:#838587;letter-spacing:0.134px'>of 1 test – 16 ms</div><div class='a' style='left:39px;top:670px;width:499px;height:287px;background:#3c3f41;'></div><div class='a' style='left:537px;top:670px;width:1px;height:287px;background:#323232;'></div><div class='a' style='left:40px;top:670px;width:495px;height:20px;background:#0d293e;'></div><svg style='left:45px;top:676px' width='12' height='8' viewBox='0 0 12 8'><path d='M2,2 L6,6 L10,2' fill='none' stroke='#adb8b5' stroke-width='1.2'/></svg><svg style='left:63px;top:672px' width='16' height='16' viewBox='0 0 16 16'><circle cx='8' cy='8' r='6.6' fill='#cc9d40'/><path d='M5.4,5.4 L10.6,10.6 M10.6,5.4 L5.4,10.6' stroke='#0d293e' stroke-width='1.7'/></svg><div class='t' style='left:82px;top:670.5px;;letter-spacing:-0.280px'>Test Results</div><svg style='left:63px;top:696px' width='12' height='8' viewBox='0 0 12 8'><path d='M2,2 L6,6 L10,2' fill='none' stroke='#adb8b5' stroke-width='1.2'/></svg><svg style='left:81px;top:692px' width='16' height='16' viewBox='0 0 16 16'><circle cx='8' cy='8' r='6.6' fill='#cc9d40'/><path d='M5.4,5.4 L10.6,10.6 M10.6,5.4 L5.4,10.6' stroke='#3c3f41' stroke-width='1.7'/></svg><div class='t' style='left:100px;top:690.5px;;letter-spacing:-0.091px'>domain.MemberJpaRepositoryTest</div><svg style='left:99px;top:712px' width='16' height='16' viewBox='0 0 16 16'><circle cx='8' cy='8' r='6.6' fill='#e2563f'/><path d='M8,4 V9' stroke='#3c3f41' stroke-width='1.8'/><circle cx='8' cy='11.4' r='1.1' fill='#3c3f41'/></svg><div class='t' style='left:118.5px;top:710.5px;;letter-spacing:-0.045px'>testMember()</div><div class='t' style='left:503.5px;top:669.5px;color:#c8c8c8;font-size:11px;letter-spacing:-0.494px'>16 ms</div><div class='t' style='left:503.5px;top:689.5px;color:#787878;font-size:11px;letter-spacing:-0.494px'>16 ms</div><div class='t' style='left:503.5px;top:709.5px;color:#787878;font-size:11px;letter-spacing:-0.494px'>16 ms</div><div class='a' style='left:538px;top:670px;width:1818px;height:287px;background:#2b2b2b;overflow:hidden'><div class='code mono ' style='left:14px;top:1px;color:#bbbbbb'>&gt; Task :classes UP-TO-DATE</div><div class='code mono ' style='left:14px;top:25px;color:#bbbbbb'>&gt; Task :compileTestJava UP-TO-DATE</div><div class='code mono ' style='left:14px;top:49px;color:#bbbbbb'>&gt; Task :processTestResources NO-SOURCE</div><div class='code mono ' style='left:14px;top:73px;color:#bbbbbb'>&gt; Task :testClasses UP-TO-DATE</div><div class='code mono ' style='left:14px;top:97px;color:#bbbbbb'>&gt; Task :test FAILED</div><div class='code mono ' style='left:14px;top:145px;color:#bbbbbb'><span class='err'>java.lang.</span><span class='glnk'>NullPointerException</span></div><div class='a' style='left:254.5px;top:149px;width:121.5px;height:16px;background:#353535;border-radius:4px'></div><div class='t' style='left:261px;top:146px;color:#8a8a8a;letter-spacing:0.765px'>Create breakpoint</div><div class='code mono ' style='left:14px;top:169px;color:#bbbbbb'><span class='err'>    at domain.MemberJpaRepository.save(</span><span class='lnk'>MemberJpaRepository.java:13</span><span class='err'>)</span></div><div class='a' style='left:662px;top:192px;width:160px;height:24px;background:#3a3a3a'></div><div class='a' style='left:534px;top:216px;width:152px;height:24px;background:#3a3a3a'></div><div class='a' style='left:534px;top:240px;width:160px;height:24px;background:#3a3a3a'></div><div class='code mono ' style='left:14px;top:193px;color:#bbbbbb'><span class='err'>    at domain.MemberJpaRepositoryTest.testMember(</span><span class='lnk'>MemberJpaRepositoryTest.java:22</span><span class='err'>)</span><span style='color:#8c8c8c'> &lt;31 internal lines&gt;</span></div><div class='code mono ' style='left:14px;top:217px;color:#bbbbbb'><span class='err'>    at java.base/java.util.ArrayList.forEach(</span><span class='glnk'>ArrayList.java:1541</span><span class='err'>)</span><span style='color:#8c8c8c'> &lt;9 internal lines&gt;</span></div><div class='code mono ' style='left:14px;top:241px;color:#bbbbbb'><span class='err'>    at java.base/java.util.ArrayList.forEach(</span><span class='glnk'>ArrayList.java:1541</span><span class='err'>)</span><span style='color:#8c8c8c'> &lt;39 internal lines&gt;</span></div><div class='code mono ' style='left:14px;top:265px;color:#bbbbbb'><span class='err'>    at worker.org.gradle.process.internal.worker.GradleWorkerMain.run(GradleWorkerMain.java:69)</span></div><svg style='left:3px;top:200px' width='10' height='10' viewBox='0 0 10 10'><rect x='0.5' y='0.5' width='9' height='9' fill='none' stroke='#5a5d5f'/><path d='M2.5,5 H7.5 M5,2.5 V7.5' stroke='#787b7d'/></svg><svg style='left:3px;top:224px' width='10' height='10' viewBox='0 0 10 10'><rect x='0.5' y='0.5' width='9' height='9' fill='none' stroke='#5a5d5f'/><path d='M2.5,5 H7.5 M5,2.5 V7.5' stroke='#787b7d'/></svg><svg style='left:3px;top:248px' width='10' height='10' viewBox='0 0 10 10'><rect x='0.5' y='0.5' width='9' height='9' fill='none' stroke='#5a5d5f'/><path d='M2.5,5 H7.5 M5,2.5 V7.5' stroke='#787b7d'/></svg></div><div class='a' style='left:0px;top:957px;width:2356px;height:1px;background:#323232;'></div><div class='a' style='left:0px;top:958px;width:2356px;height:21px;background:#3c3f41;'></div><div class='a' style='left:0px;top:979px;width:2356px;height:3px;background:#43474a;'></div><div class='a' style='left:130px;top:958px;width:54px;height:21px;background:#2d2f30;'></div><svg style='left:20px;top:961px' width='16' height='16' viewBox='0 0 16 16'><circle cx='5' cy='3.2' r='1.7' fill='#c6c9c9'/><circle cx='5' cy='13' r='1.7' fill='#c6c9c9'/><circle cx='11.4' cy='5' r='1.7' fill='#c6c9c9'/><path d='M5,3 V13 M5,10.6 C8.5,10.4 11.2,9 11.4,5' fill='none' stroke='#c6c9c9' stroke-width='1.4'/></svg><div class='t' style='left:39px;top:959.5px;;letter-spacing:-0.136px'>Version Control</div><svg style='left:141px;top:964px' width='9' height='11' viewBox='0 0 9 11'><path d='M0,0 L8.6,5.5 L0,11 Z' fill='#c6c9c9'/></svg><div class='t' style='left:156px;top:959.5px;;letter-spacing:-0.839px'>Run</div><svg style='left:194px;top:961px' width='16' height='16' viewBox='0 0 16 16'><path d='M5.4,4.5 H12.5 M5.4,8 H12.5 M5.4,11.5 H12.5' stroke='#c6c9c9' stroke-width='1.6'/><path d='M2,4.5 H4 M2,8 H4 M2,11.5 H4' stroke='#c6c9c9' stroke-width='1.6'/></svg><div class='t' style='left:211px;top:959.5px;;letter-spacing:-0.663px'>TODO</div><svg style='left:261px;top:961px' width='16' height='16' viewBox='0 0 16 16'><circle cx='8' cy='8' r='5.4' fill='#c6c9c9'/><path d='M8,4.6 V8.8' stroke='#3c3f41' stroke-width='1.6'/><circle cx='8' cy='11' r='0.95' fill='#3c3f41'/></svg><div class='t' style='left:280px;top:959.5px;;letter-spacing:-0.298px'>Problems</div><svg style='left:348px;top:961px' width='16' height='16' viewBox='0 0 16 16'><rect x='2' y='2.5' width='11.5' height='10.5' fill='#c6c9c9'/><path d='M4,5 L7,7.5 L4,10 M7.6,10.6 H11.6' fill='none' stroke='#3c3f41' stroke-width='1.3'/></svg><div class='t' style='left:366px;top:959.5px;;letter-spacing:-0.157px'>Terminal</div><svg style='left:429px;top:961px' width='16' height='16' viewBox='0 0 16 16'><path d='M7.6,13.2 A5.4,5.4 0 1 1 12.4,6.4' fill='none' stroke='#c6c9c9' stroke-width='1.5'/><path d='M7,4.4 V8 H9.6' fill='none' stroke='#c6c9c9' stroke-width='1.3'/><path d='M9.6,8.6 L15,12 L9.6,15.4 Z' fill='#c6c9c9'/></svg><div class='t' style='left:448px;top:959.5px;;letter-spacing:-0.227px'>Profiler</div><svg style='left:501px;top:961px' width='16' height='16' viewBox='0 0 16 16'><path d='M2,5.4 L6,1.8 L9,4.6 L7.9,5.8 L14.4,12.6 L12.6,14.4 L6,7.6 L4.8,8.6 Z' fill='#c6c9c9'/></svg><div class='t' style='left:520px;top:959.5px;;letter-spacing:-0.438px'>Build</div><svg style='left:564px;top:961px' width='16' height='16' viewBox='0 0 16 16'><path d='M8,1.6 L14.4,4.6 L8,7.6 L1.6,4.6 Z' fill='#c6c9c9'/><path d='M1.8,8 L8,10.9 L14.2,8 M1.8,11.2 L8,14.1 L14.2,11.2' fill='none' stroke='#c6c9c9' stroke-width='1.5'/></svg><div class='t' style='left:583px;top:959.5px;;letter-spacing:-0.478px'>Dependencies</div><svg style='left:675px;top:961px' width='16' height='16' viewBox='0 0 16 16'><circle cx='3' cy='12.4' r='2.1' fill='#c6c9c9'/><circle cx='7.6' cy='3.6' r='2.1' fill='#c6c9c9'/><circle cx='12.6' cy='12.4' r='2.1' fill='#c6c9c9'/><path d='M3,12.4 L7.6,3.6 L12.6,12.4' fill='none' stroke='#c6c9c9' stroke-width='1.4'/></svg><div class='t' style='left:693px;top:959.5px;;letter-spacing:-0.264px'>Endpoints</div><svg style='left:763px;top:961px' width='16' height='16' viewBox='0 0 16 16'><path d='M1.4,11.6 C0.6,7 4.4,5.4 8.6,5.2 C11,5 12.4,4 13.2,2.4 C15,6.2 13.8,10 10.6,11.2 C7.2,12.4 4.4,11.4 2.4,13.2 Z' fill='#c6c9c9'/></svg><div class='t' style='left:781px;top:959.5px;;letter-spacing:-0.348px'>Spring</div><svg style='left:836px;top:961px' width='16' height='16' viewBox='0 0 16 16'><path d='M5.4,13.6 V3.4 M2.4,6.2 L5.4,2.8 L8.4,6.2' fill='none' stroke='#c6c9c9' stroke-width='1.5'/><path d='M11,2.6 V12.6 M8,10 L11,13.4 L14,10' fill='none' stroke='#c6c9c9' stroke-width='1.5'/></svg><div class='t' style='left:855px;top:959.5px;;letter-spacing:-0.248px'>Analyze Dataflow To</div></body></html>
